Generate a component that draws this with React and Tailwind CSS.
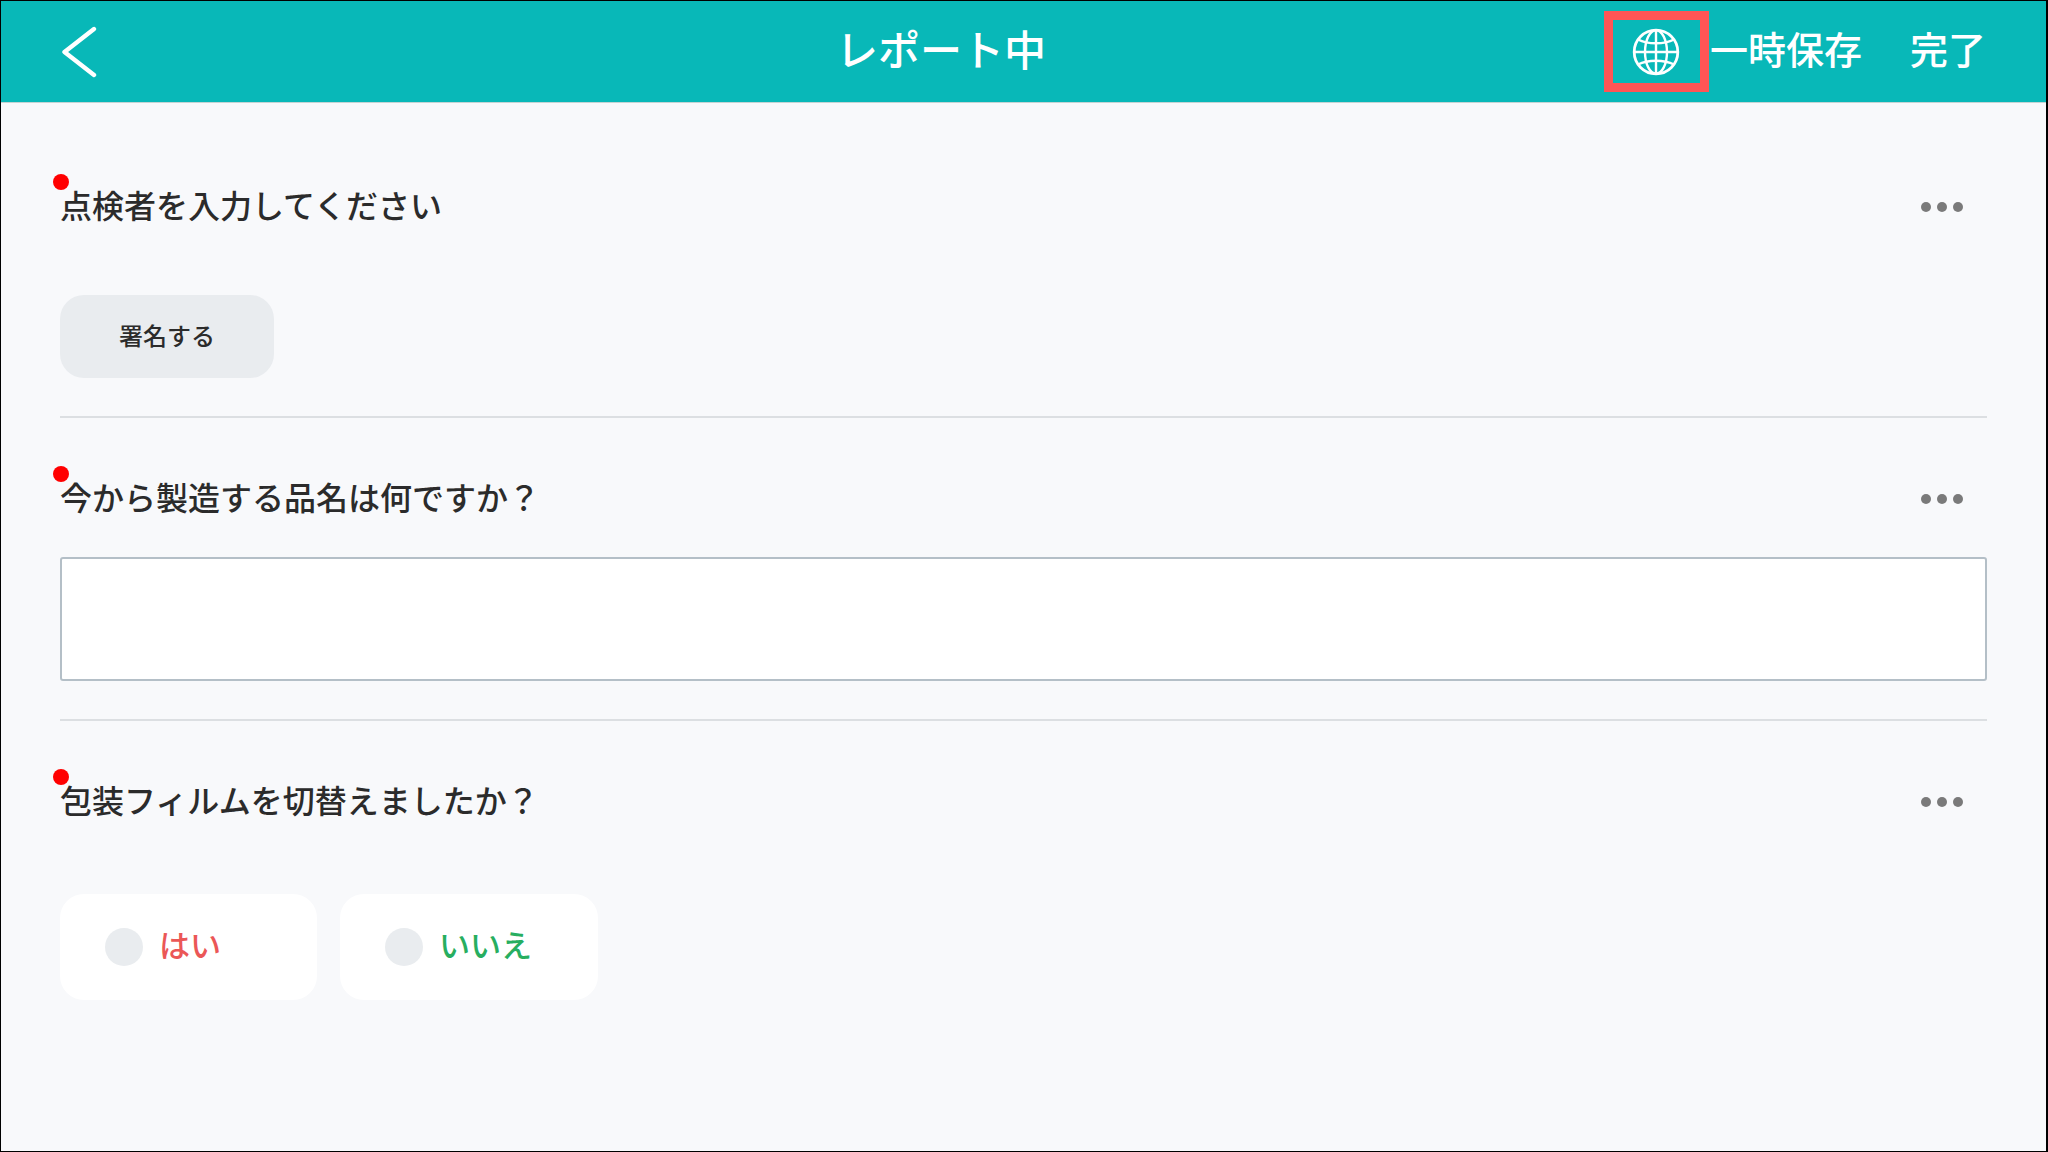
import React from 'react'

const FONT = "font-['Liberation_Sans','Noto_Sans_CJK_JP',sans-serif]"

const GlobeIcon = () => (
  <svg width="48" height="48" viewBox="0 0 48 48" fill="none" stroke="white" strokeWidth="2.4">
    <circle cx="24" cy="24" r="21.8" strokeWidth="2.8" />
    <ellipse cx="24" cy="24" rx="11" ry="21.8" />
    <path d="M24 2v44M2.2 24h43.6" />
    <path d="M6 11.5c5 2.6 11 3.8 18 3.8s13-1.2 18-3.8" />
    <path d="M6 36.5c5-2.6 11-3.8 18-3.8s13 1.2 18 3.8" />
  </svg>
)

const BackIcon = () => (
  <svg width="36" height="52" viewBox="0 0 36 52" fill="none" stroke="white" strokeWidth="4.4" strokeLinecap="round" strokeLinejoin="round">
    <path d="M32 3 2.5 26 32 49" />
  </svg>
)

// 題目列（標題 + 紅點 + 更多）
const QuestionRow = ({ title }) => (
  <div className="relative flex h-[48px] items-center justify-between pr-[24px]">
    <span className="absolute -left-[7px] -top-[9px] h-[16px] w-[16px] rounded-full bg-[#ff0000]" />
    <h2 className="text-[32px] font-medium leading-[48px] text-[#2b2b2b]">{title}</h2>
    <div className="flex gap-[6px]">
      <span className="h-[10px] w-[10px] rounded-full bg-[#7a7a7a]" />
      <span className="h-[10px] w-[10px] rounded-full bg-[#7a7a7a]" />
      <span className="h-[10px] w-[10px] rounded-full bg-[#7a7a7a]" />
    </div>
  </div>
)

const Choice = ({ label, color, width }) => (
  <div className={`flex h-[106px] items-center gap-[16px] rounded-[24px] bg-white pl-[45px] ${width}`}>
    <span className="h-[38px] w-[38px] rounded-full bg-[#e9ecef]" />
    <span className={`text-[31px] font-medium ${color}`}>{label}</span>
  </div>
)

export default function App() {
  return (
    <div className={`flex h-[1152px] w-[2048px] flex-col border-t border-b border-l border-r-2 border-black bg-[#f8f9fb] ${FONT}`}>
      <header className="flex h-[102px] shrink-0 items-center border-b border-[#c4d4d4] bg-[#08b8b8] text-white">
        <div className="flex w-[277px] items-center pl-[61px]">
          <BackIcon />
        </div>
        <h1 className="flex-1 text-center text-[42px] font-medium">レポート中</h1>
        <div className="flex items-center pr-[60px]">
          <div className="relative flex h-[81px] w-[105px] items-center justify-center border-[9px] border-[#ff5555]">
            <GlobeIcon />
          </div>
          <span className="ml-[1px] text-[38px] font-medium">一時保存</span>
          <span className="ml-[48px] text-[38px] font-medium">完了</span>
        </div>
      </header>

      <main className="flex flex-col px-[59px]">
        <section className="border-b-2 border-[#dcdfe2] pb-[38px] pt-[80px]">
          <QuestionRow title="点検者を入力してください" />
          <button className="mt-[64px] flex h-[83px] w-[214px] items-center justify-center rounded-[24px] bg-[#e9ecef] text-[24px] font-medium text-[#2b2b2b]">
            署名する
          </button>
        </section>

        <section className="border-b-2 border-[#dcdfe2] pb-[38px] pt-[57px]">
          <QuestionRow title="今から製造する品名は何ですか？" />
          <div className="mt-[34px] h-[124px] rounded-[3px] border-2 border-[#b4bfc7] bg-white" />
        </section>

        <section className="pt-[57px]">
          <QuestionRow title="包装フィルムを切替えましたか？" />
          <div className="mt-[68px] flex gap-[23px]">
            <Choice label="はい" color="text-[#eb5757]" width="w-[257px]" />
            <Choice label="いいえ" color="text-[#27ae60]" width="w-[258px]" />
          </div>
        </section>
      </main>
    </div>
  )
}
